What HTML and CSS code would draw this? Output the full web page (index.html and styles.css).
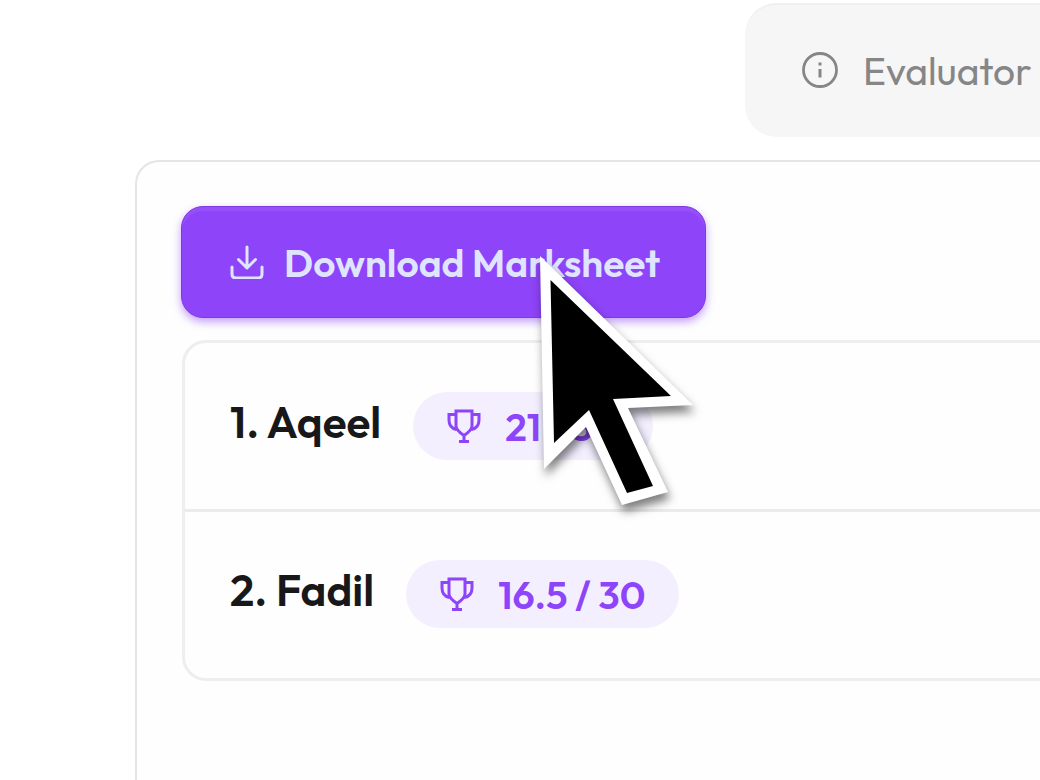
FILE: index.html
```html
<!DOCTYPE html>
<html lang="en">
<head>
<meta charset="utf-8">
<meta name="viewport" content="width=device-width, initial-scale=1">
<title>Marksheet</title>
<link rel="stylesheet" href="styles.css">
</head>
<body>
<div class="page">
  <header class="topbar">
    <div class="notice">
      <svg class="notice-icon" viewBox="0 0 36 36" fill="none" stroke="currentColor" aria-hidden="true">
        <circle cx="18" cy="18" r="16.500" stroke-width="2.800"/>
        <path d="M18 17v8.500" stroke-width="3"/>
        <path d="M18 10.500v3" stroke-width="3"/>
      </svg>
      <span>Evaluator</span>
    </div>
  </header>
  <main class="panel">
    <button class="download" type="button">
      <svg class="icon" viewBox="0 0 34 34" fill="none" stroke="currentColor" stroke-width="3" stroke-linecap="round" stroke-linejoin="round" aria-hidden="true">
        <path d="M17 2v21M8.500 14.500l8.500 8.500 8.500-8.500M2 22v7q0 4 4 4h22q4 0 4-4v-7"/>
      </svg>
      <span>Download Marksheet</span>
    </button>
    <ol class="students">
      <li class="student">
        <span class="name">1. Aqeel</span>
        <span class="score">
          <svg class="icon" viewBox="0 0 34 34" fill="none" stroke="currentColor" stroke-width="3" aria-hidden="true">
            <path d="M9 2h16v15q0 4-8 9.500q-8-5.500-8-9.500zM9 5.500H2v5.500q0 8 7.500 9.500M25 5.500H32v5.500q0 8-7.500 9.500M17 26v6M12 32.500h10"/>
          </svg>
          <span>21 / 30</span>
        </span>
      </li>
      <li class="student">
        <span class="name">2. Fadil</span>
        <span class="score">
          <svg class="icon" viewBox="0 0 34 34" fill="none" stroke="currentColor" stroke-width="3" aria-hidden="true">
            <path d="M9 2h16v15q0 4-8 9.500q-8-5.500-8-9.500zM9 5.500H2v5.500q0 8 7.500 9.500M25 5.500H32v5.500q0 8-7.500 9.500M17 26v6M12 32.500h10"/>
          </svg>
          <span>16.5 / 30</span>
        </span>
      </li>
    </ol>
  </main>
  <svg class="cursor" viewBox="0 0 153 249" aria-hidden="true">
    <path fill="#fff" d="M0 0 153 149 88 152 128 236 82 249 46 171 4 213z"/>
    <path fill="#000" d="M10.500 24 131 140 73 143 113 230 87 237 49 154 14 187z"/>
  </svg>
</div>
</body>
</html>
```
FILE: styles.css
```css
* {
  box-sizing: border-box;
}

body {
  margin: 0;
  background: #fff;
  color: #18181b;
  font-family: Outfit, Lato, sans-serif;
  overflow: hidden;
}

.page {
  position: relative;
  display: flex;
  flex-direction: column;
  gap: 23px;
  height: 100vh;
  padding: 3px 0 0 135px;
  overflow: hidden;
}

.topbar {
  padding-left: 610px;
}

.notice {
  display: flex;
  align-items: center;
  gap: 25px;
  height: 134px;
  padding: 0 0 2px 57px;
  border-top: 2px solid #efefef;
  border-radius: 32px 0 0 32px;
  background: #f6f6f6;
  color: #868686;
  font-size: 39px;
  white-space: nowrap;
}

.notice-icon {
  flex: none;
  width: 36px;
  height: 36px;
}

.panel {
  flex: 1;
  padding: 44px 0 0 44px;
  border: solid #e4e5e9;
  border-width: 2px 0 0 2px;
  border-radius: 24px 0 0 0;
  background: #fefefe;
}

.icon {
  flex: none;
  width: 34px;
  height: 34px;
}

.download {
  display: flex;
  align-items: center;
  gap: 20px;
  height: 112px;
  margin: 0 0 22px;
  padding: 0 45px 0 48px;
  border: 1px solid #7f3be0;
  border-radius: 22px;
  background: #8e44f8;
  box-shadow: inset 0 4px 0 #9750f8, 0 4px 8px rgb(142 68 248 / 50%);
  color: #dfe5ff;
  font: 600 39px Outfit, Lato, sans-serif;
  white-space: nowrap;
}

.students {
  margin: 0 0 0 1px;
  padding: 0;
  border: solid #eee;
  border-width: 3px 0 3px 3px;
  border-radius: 24px 0 0 24px;
  list-style: none;
}

.student {
  display: flex;
  align-items: center;
  gap: 32px;
  height: 166px;
  padding-left: 45px;
  white-space: nowrap;
}

.student + .student {
  height: 169px;
  padding-bottom: 2px;
  border-top: 3px solid #ebebeb;
}

.name {
  padding-bottom: 9px;
  font-size: 44px;
  font-weight: 600;
}

.score {
  display: flex;
  align-items: center;
  gap: 24px;
  height: 68px;
  padding: 0 34px;
  border-radius: 34px;
  background: #f3efff;
  color: #8e44f8;
  font-size: 39px;
  font-weight: 600;
}

.cursor {
  position: absolute;
  top: 256px;
  left: 540px;
  width: 153px;
  height: 249px;
  overflow: visible;
  filter: drop-shadow(2px 7px 5px rgb(0 0 0 / 50%));
  pointer-events: none;
}
```
